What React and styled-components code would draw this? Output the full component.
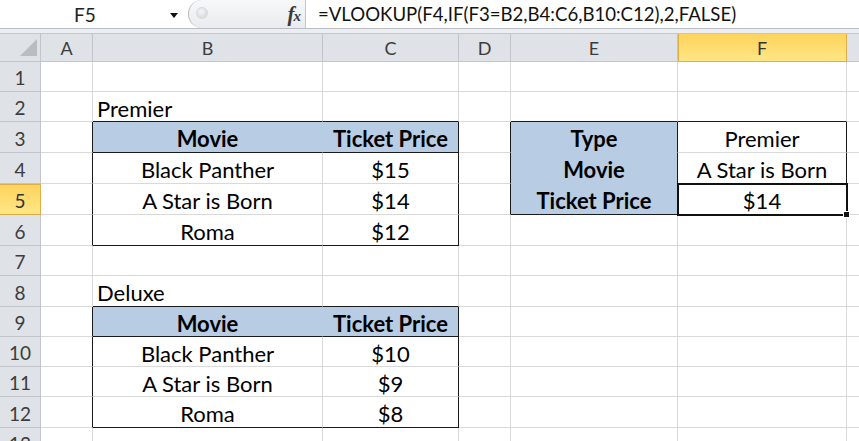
import React from "react";
import styled, { createGlobalStyle, css } from "styled-components";

const GlobalStyle = createGlobalStyle`
  html, body { margin: 0; padding: 0; background: #fff; }
  body { font-family: Lato, "Liberation Sans", sans-serif; }
`;

const Frame = styled.div`
  width: 859px;
  height: 441px;
  overflow: hidden;
  background: #fff;
  display: flex;
  flex-direction: column;
`;

const FormulaBar = styled.div`
  height: 28px;
  border-bottom: 1px solid #b9bec5;
  display: flex;
  align-items: stretch;
  background: #fff;
  flex-shrink: 0;
`;

const NameBox = styled.div`
  width: 170px;
  display: flex;
  align-items: center;
  justify-content: center;
  font-size: 19px;
  color: #222;
`;

const DropArrow = styled.div`
  width: 18px;
  display: flex;
  align-items: center;
  justify-content: flex-start;
  &::after {
    content: "";
    width: 0;
    height: 0;
    border-left: 4.5px solid transparent;
    border-right: 4.5px solid transparent;
    border-top: 5px solid #111;
    margin-top: 2px;
  }
`;

const Pill = styled.div`
  width: 118px;
  border-left: 1px solid #b3b8bf;
  border-right: 1px solid #c3c7cd;
  border-radius: 14px 0 0 14px / 14px 0 0 14px;
  background: linear-gradient(#f7f8f9, #e9ebee);
  display: flex;
  align-items: center;
  justify-content: space-between;
  padding: 0 5px 0 7px;
  box-sizing: border-box;
`;

const Knob = styled.div`
  width: 10px;
  height: 10px;
  border-radius: 50%;
  background: radial-gradient(circle at 40% 35%, #f4f5f6, #cfd3d8);
  border: 1px solid #d7dade;
  margin-top: -3px;
`;

const Fx = styled.span`
  font-family: "Liberation Serif", "DejaVu Serif", serif;
  font-style: italic;
  font-weight: bold;
  font-size: 21px;
  color: #3a3a3a;
  letter-spacing: -1px;
  & small {
    font-size: 15px;
  }
`;

const FormulaText = styled.div`
  display: flex;
  align-items: center;
  padding-left: 12px;
  font-size: 18.6px;
  color: #111;
  white-space: nowrap;
`;

const Band = styled.div`
  height: 4px;
  background: #eceef1;
  border-bottom: 1px solid #c4c8ce;
  flex-shrink: 0;
`;

const Sheet = styled.div`
  display: grid;
  grid-template-columns: ${(p) => p.$cols};
  grid-template-rows: ${(p) => p.$rows};
`;

const headerBase = css`
  box-sizing: border-box;
  display: flex;
  align-items: center;
  justify-content: center;
  font-size: 18px;
  color: #3c3c3c;
  background: #dfe2e6;
  border-right: 1px solid #c2c6cc;
  border-bottom: 1px solid #c2c6cc;
  overflow: hidden;
`;

const ColHeader = styled.div`
  ${headerBase}
  padding-top: 1px;
  ${(p) =>
    p.$active &&
    css`
      background: linear-gradient(#fdd35c, #ffe685);
      border-right-color: #e0ae48;
      border-bottom-color: #e0ae48;
      box-shadow: inset 1px 0 0 #e0ae48;
      color: #333;
    `}
`;

const RowHeader = styled.div`
  ${headerBase}
  align-items: ${(p) => (p.$partial ? "flex-start" : "center")};
  padding-top: ${(p) => (p.$partial ? "4px" : "2px")};
  font-size: 19px;
  ${(p) =>
    p.$active &&
    css`
      background: linear-gradient(#fdd35c, #ffe685);
      border-right-color: #e0ae48;
      border-bottom-color: #e0ae48;
      box-shadow: inset 0 1px 0 #e0ae48;
      color: #333;
    `}
`;

const Corner = styled.div`
  ${headerBase}
  justify-content: flex-end;
  align-items: flex-end;
  padding: 0 3px 5px 0;
`;

const Cell = styled.div`
  box-sizing: border-box;
  display: flex;
  align-items: center;
  padding-top: 3px;
  justify-content: ${(p) => (p.$align === "left" ? "flex-start" : "center")};
  padding-left: ${(p) => (p.$align === "left" ? "4px" : "0")};
  font-size: 22px;
  font-weight: ${(p) => (p.$bold ? 700 : 400)};
  color: #000;
  white-space: nowrap;
  background: ${(p) => p.$fill || "#fff"};
  border-right: 1px solid ${(p) => p.$right};
  border-bottom: 1px solid ${(p) => p.$bottom};
  position: ${(p) => (p.$selected ? "relative" : "static")};
`;

const Selection = styled.div`
  position: absolute;
  left: -1px;
  top: -1px;
  right: -2px;
  bottom: -2px;
  border: 2px solid #111;
  z-index: 2;
  pointer-events: none;
  &::after {
    content: "";
    position: absolute;
    right: -4px;
    bottom: -4px;
    width: 5px;
    height: 5px;
    background: #111;
    border: 1px solid #fff;
  }
`;

const COLS = ["A", "B", "C", "D", "E", "F", "G"];
const COL_W = [52, 230, 136, 52, 167, 169, 80];
const ROW_H = [30, 30, 31, 31, 31, 31, 30, 31, 30, 30, 30, 31, 20];
const BLUE = "#b8cce4";
const GRID = "#d9d9d9";
const BLACK = "#1a1a1a";

const data = {
  "2B": { v: "Premier", align: "left" },
  "3B": { v: "Movie", bold: true, fill: BLUE },
  "3C": { v: "Ticket Price", bold: true, fill: BLUE },
  "3E": { v: "Type", bold: true, fill: BLUE },
  "3F": { v: "Premier" },
  "4B": { v: "Black Panther" },
  "4C": { v: "$15" },
  "4E": { v: "Movie", bold: true, fill: BLUE },
  "4F": { v: "A Star is Born" },
  "5B": { v: "A Star is Born" },
  "5C": { v: "$14" },
  "5E": { v: "Ticket Price", bold: true, fill: BLUE },
  "5F": { v: "$14", selected: true },
  "6B": { v: "Roma" },
  "6C": { v: "$12" },
  "8B": { v: "Deluxe", align: "left" },
  "9B": { v: "Movie", bold: true, fill: BLUE },
  "9C": { v: "Ticket Price", bold: true, fill: BLUE },
  "10B": { v: "Black Panther" },
  "10C": { v: "$10" },
  "11B": { v: "A Star is Born" },
  "11C": { v: "$9" },
  "12B": { v: "Roma" },
  "12C": { v: "$8" },
};

const boxes = [
  { r1: 3, r2: 6, c1: 1, c2: 2, innerRows: [3], innerCols: [] },
  { r1: 9, r2: 12, c1: 1, c2: 2, innerRows: [9], innerCols: [] },
  { r1: 3, r2: 5, c1: 4, c2: 5, innerRows: [], innerCols: [4] },
];

function bottomBlack(r, c) {
  return boxes.some(
    (b) =>
      c >= b.c1 &&
      c <= b.c2 &&
      (r === b.r1 - 1 || r === b.r2 || b.innerRows.includes(r))
  );
}

function rightBlack(r, c) {
  return boxes.some(
    (b) =>
      r >= b.r1 &&
      r <= b.r2 &&
      (c === b.c1 - 1 || c === b.c2 || b.innerCols.includes(c))
  );
}

function fillOf(r, c) {
  const d = data[`${r}${COLS[c]}`];
  return d && d.fill;
}

export default function App() {
  const cols = `41px ${COL_W.map((w) => w + "px").join(" ")}`;
  const rows = `28px ${ROW_H.map((h) => h + "px").join(" ")}`;
  const cells = [];

  cells.push(
    <Corner key="corner">
      <svg width="17" height="17" viewBox="0 0 17 17">
        <polygon points="17,0 17,17 0,17" fill="#b9bdc3" />
      </svg>
    </Corner>
  );
  COLS.forEach((c) =>
    cells.push(
      <ColHeader key={`h${c}`} $active={c === "F"}>
        {c}
      </ColHeader>
    )
  );

  ROW_H.forEach((_, i) => {
    const r = i + 1;
    cells.push(
      <RowHeader key={`r${r}`} $active={r === 5} $partial={r === 13}>
        {r}
      </RowHeader>
    );
    COLS.forEach((col, ci) => {
      const d = data[`${r}${col}`] || {};
      const fill = d.fill;
      const right = rightBlack(r, ci)
        ? BLACK
        : fill && fillOf(r, ci + 1) === fill
        ? fill
        : GRID;
      const bottom = bottomBlack(r, ci)
        ? BLACK
        : fill && fillOf(r + 1, ci) === fill
        ? fill
        : GRID;
      cells.push(
        <Cell
          key={`${r}${col}`}
          $align={d.align}
          $bold={d.bold}
          $fill={fill}
          $right={right}
          $bottom={bottom}
          $selected={d.selected}
        >
          {d.v}
          {d.selected && <Selection />}
        </Cell>
      );
    });
  });

  return (
    <>
      <GlobalStyle />
      <Frame>
        <FormulaBar>
          <NameBox>F5</NameBox>
          <DropArrow />
          <Pill>
            <Knob />
            <Fx>
              f<small>x</small>
            </Fx>
          </Pill>
          <FormulaText>=VLOOKUP(F4,IF(F3=B2,B4:C6,B10:C12),2,FALSE)</FormulaText>
        </FormulaBar>
        <Band />
        <Sheet $cols={cols} $rows={rows}>
          {cells}
        </Sheet>
      </Frame>
    </>
  );
}
